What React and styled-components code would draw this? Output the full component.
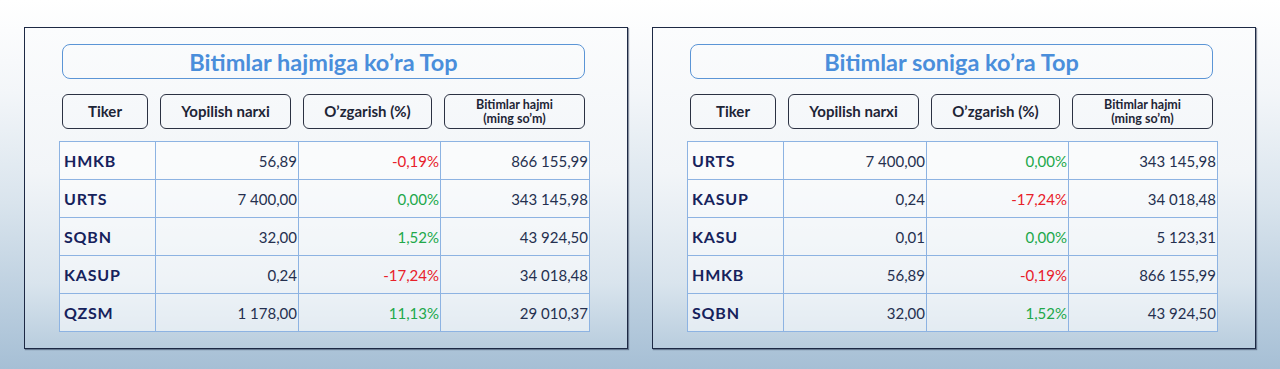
import styled, { createGlobalStyle } from 'styled-components';

const byVolume = [
  { ticker: 'HMKB', price: '56,89', change: '-0,19%', volume: '866 155,99' },
  { ticker: 'URTS', price: '7 400,00', change: '0,00%', volume: '343 145,98' },
  { ticker: 'SQBN', price: '32,00', change: '1,52%', volume: '43 924,50' },
  { ticker: 'KASUP', price: '0,24', change: '-17,24%', volume: '34 018,48' },
  { ticker: 'QZSM', price: '1 178,00', change: '11,13%', volume: '29 010,37' },
];

const byCount = [
  { ticker: 'URTS', price: '7 400,00', change: '0,00%', volume: '343 145,98' },
  { ticker: 'KASUP', price: '0,24', change: '-17,24%', volume: '34 018,48' },
  { ticker: 'KASU', price: '0,01', change: '0,00%', volume: '5 123,31' },
  { ticker: 'HMKB', price: '56,89', change: '-0,19%', volume: '866 155,99' },
  { ticker: 'SQBN', price: '32,00', change: '1,52%', volume: '43 924,50' },
];

const Panel = ({ title, rows }) => (
  <Card>
    <Title>{title}</Title>
    <HeadRow>
      <HeadCell>Tiker</HeadCell>
      <HeadCell>Yopilish narxi</HeadCell>
      <HeadCell>O’zgarish (%)</HeadCell>
      <HeadCell small>Bitimlar hajmi<br />(ming so’m)</HeadCell>
    </HeadRow>
    <Table>
      <colgroup>
        <col style={{ width: 96 }} />
        <col style={{ width: 143 }} />
        <col style={{ width: 142 }} />
        <col />
      </colgroup>
      <tbody>
        {rows.map((r) => (
          <tr key={r.ticker}>
            <Ticker>{r.ticker}</Ticker>
            <Num>{r.price}</Num>
            <Num tone={r.change.startsWith('-') ? 'down' : 'up'}>{r.change}</Num>
            <Num>{r.volume}</Num>
          </tr>
        ))}
      </tbody>
    </Table>
  </Card>
);

const App = () => {
  return (
    <>
      <GlobalStyle />
      <Page>
        <Panel title="Bitimlar hajmiga ko’ra Top" rows={byVolume} />
        <Panel title="Bitimlar soniga ko’ra Top" rows={byCount} />
      </Page>
    </>
  );
};

const GlobalStyle = createGlobalStyle`
  html, body { margin: 0; padding: 0; }
  body { font-family: 'Lato', 'DejaVu Sans', sans-serif; }
`;

const Page = styled.div`
  width: 1280px;
  height: 369px;
  box-sizing: border-box;
  padding: 27px 24px 0 24px;
  display: flex;
  gap: 24px;
  background: linear-gradient(180deg, #ffffff 0%, #f3f6f9 25%, #d9e4ed 55%, #a6bfd5 100%);
`;

const Card = styled.div`
  width: 604px;
  height: 322px;
  box-sizing: border-box;
  border: 1px solid #1d2944;
  box-shadow: 1px 1px 1px rgba(20, 30, 60, 0.45);
  background: linear-gradient(180deg, #fbfcfd 0%, #f2f5f8 45%, #d9e4ed 80%, #b9cdde 100%);
  padding: 16px 0 0 34px;
  display: flex;
  flex-direction: column;
  align-items: flex-start;
`;

const Title = styled.div`
  width: 523px;
  height: 35px;
  box-sizing: border-box;
  margin-left: 3px;
  border: 1.5px solid #5b95d6;
  border-radius: 8px;
  display: flex;
  align-items: center;
  justify-content: center;
  color: #4a8edb;
  font-weight: 700;
  font-size: 23.5px;
`;

const HeadRow = styled.div`
  margin: 15px 0 0 3px;
  width: 523px;
  display: grid;
  grid-template-columns: 86px 131px 129px 1fr;
  gap: 12px;
`;

const HeadCell = styled.div`
  height: 35px;
  box-sizing: border-box;
  border: 1.5px solid #2b3142;
  border-radius: 6px;
  display: flex;
  align-items: center;
  justify-content: center;
  text-align: center;
  color: #1e2536;
  font-weight: 700;
  font-size: ${(p) => (p.small ? '12.5px' : '15px')};
  line-height: ${(p) => (p.small ? '14px' : '1')};
`;

const Table = styled.table`
  margin-top: 12px;
  width: 531px;
  border-collapse: collapse;
  table-layout: fixed;

  td {
    height: 37px;
    padding: 0;
    border: 1px solid #8db3e2;
    background: rgba(255, 255, 255, 0.55);
    font-size: 15px;
    white-space: nowrap;
  }
`;

const Ticker = styled.td`
  padding-left: 4px !important;
  color: #16225c;
  font-weight: 700;
  font-size: 16px !important;
  letter-spacing: 0.8px;
`;

const Num = styled.td`
  text-align: right;
  padding-right: 1px !important;
  color: ${(p) => (p.tone === 'down' ? '#e8202a' : p.tone === 'up' ? '#21a84a' : '#25304f')};
`;

export default App;
